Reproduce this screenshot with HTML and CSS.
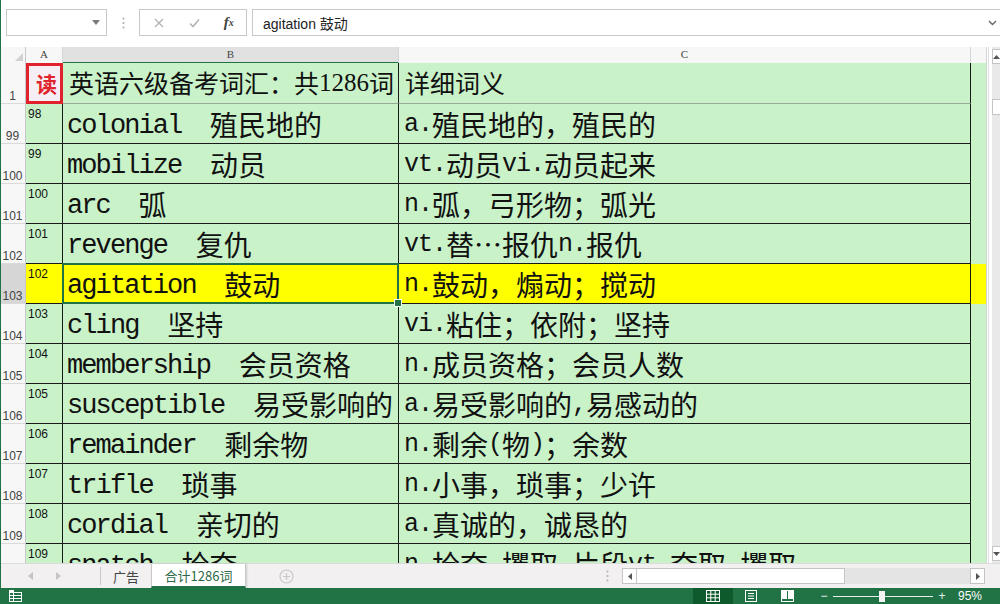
FILE: index.html
```html
<!DOCTYPE html>
<html lang="zh-CN">
<head>
<meta charset="utf-8">
<title>英语六级备考词汇</title>
<link rel="stylesheet" href="styles.css">
</head>
<body>
<div class="app">
  <div class="fbar">
    <div class="namebox">
      <svg width="8" height="5" viewBox="0 0 8 5"><path d="M0 0H8L4 5Z" fill="#7a7a7a"/></svg>
    </div>
    <div class="grip">
      <svg width="3" height="12" viewBox="0 0 3 12"><circle cx="1.5" cy="1.5" r="1" fill="#a8a8a8"/><circle cx="1.5" cy="6" r="1" fill="#a8a8a8"/><circle cx="1.5" cy="10.5" r="1" fill="#a8a8a8"/></svg>
    </div>
    <div class="fxbox">
      <span class="fxi"><svg width="10" height="10" viewBox="0 0 10 10"><path d="M1 1L9 9M9 1L1 9" stroke="#b4b4b4" stroke-width="1.4"/></svg></span>
      <span class="fxi"><svg width="11" height="10" viewBox="0 0 11 10"><path d="M1 5.5L4 8.5L10 1.5" stroke="#b4b4b4" stroke-width="1.6" fill="none"/></svg></span>
      <span class="fxi fx"><i>f</i><i class="x">x</i></span>
    </div>
    <div class="finput">
      <span>agitation 鼓动</span>
      <svg class="chev" width="9" height="6" viewBox="0 0 9 6"><path d="M1 1L4.5 4.5L8 1" stroke="#666" stroke-width="1.4" fill="none"/></svg>
    </div>
  </div>

  <div class="main">
    <div class="sheet">
      <div class="row hdr">
        <div class="corner"><svg width="8" height="8" viewBox="0 0 8 8"><path d="M8 0V8H0Z" fill="#d2d2d2"/></svg></div>
        <div class="ch">A</div>
        <div class="ch sel">B</div>
        <div class="ch">C</div>
        <div class="ch"></div>
      </div>

      <div class="row first">
        <div class="rh">1</div>
        <div class="a read">读</div>
        <div class="b t">英语六级备考词汇：共<span class="n">1286</span>词</div>
        <div class="c t">详细词义</div>
        <div class="d t"></div>
      </div>

      <div class="row">
        <div class="rh">99</div><div class="a">98</div>
        <div class="b"><span class="l">colonial  </span>殖民地的</div>
        <div class="c"><span class="l">a.</span>殖民地的，殖民的</div><div class="d"></div>
      </div>
      <div class="row">
        <div class="rh">100</div><div class="a">99</div>
        <div class="b"><span class="l">mobilize  </span>动员</div>
        <div class="c"><span class="l">vt.</span>动员<span class="l">vi.</span>动员起来</div><div class="d"></div>
      </div>
      <div class="row">
        <div class="rh">101</div><div class="a">100</div>
        <div class="b"><span class="l">arc  </span>弧</div>
        <div class="c"><span class="l">n.</span>弧，弓形物；弧光</div><div class="d"></div>
      </div>
      <div class="row">
        <div class="rh">102</div><div class="a">101</div>
        <div class="b"><span class="l">revenge  </span>复仇</div>
        <div class="c"><span class="l">vt.</span>替…报仇<span class="l">n.</span>报仇</div><div class="d"></div>
      </div>
      <div class="row hl">
        <div class="rh on">103</div><div class="a">102</div>
        <div class="b sel"><span class="l">agitation  </span>鼓动</div>
        <div class="c"><span class="l">n.</span>鼓动，煽动；搅动</div><div class="d"></div>
      </div>
      <div class="row">
        <div class="rh">104</div><div class="a">103</div>
        <div class="b"><span class="l">cling  </span>坚持</div>
        <div class="c"><span class="l">vi.</span>粘住；依附；坚持</div><div class="d"></div>
      </div>
      <div class="row">
        <div class="rh">105</div><div class="a">104</div>
        <div class="b"><span class="l">membership  </span>会员资格</div>
        <div class="c"><span class="l">n.</span>成员资格；会员人数</div><div class="d"></div>
      </div>
      <div class="row">
        <div class="rh">106</div><div class="a">105</div>
        <div class="b"><span class="l">susceptible  </span>易受影响的</div>
        <div class="c"><span class="l">a.</span>易受影响的<span class="l">,</span>易感动的</div><div class="d"></div>
      </div>
      <div class="row">
        <div class="rh">107</div><div class="a">106</div>
        <div class="b"><span class="l">remainder  </span>剩余物</div>
        <div class="c"><span class="l">n.</span>剩余<span class="l">(</span>物<span class="l">)</span>；余数</div><div class="d"></div>
      </div>
      <div class="row">
        <div class="rh">108</div><div class="a">107</div>
        <div class="b"><span class="l">trifle  </span>琐事</div>
        <div class="c"><span class="l">n.</span>小事，琐事；少许</div><div class="d"></div>
      </div>
      <div class="row">
        <div class="rh">109</div><div class="a">108</div>
        <div class="b"><span class="l">cordial  </span>亲切的</div>
        <div class="c"><span class="l">a.</span>真诚的，诚恳的</div><div class="d"></div>
      </div>
      <div class="row">
        <div class="rh">110</div><div class="a">109</div>
        <div class="b"><span class="l">snatch  </span>抢夺</div>
        <div class="c"><span class="l">n.</span>抢夺<span class="l">,</span>攫取<span class="l">,</span>片段<span class="l">vt.</span>夺取<span class="l">,</span>攫取</div><div class="d"></div>
      </div>
    </div>

    <div class="vscroll">
      <div class="vtrack">
        <div class="vbtn"><svg width="7" height="4" viewBox="0 0 7 4"><path d="M0 4H7L3.5 0Z" fill="#555"/></svg></div>
        <div class="vthumb"></div>
        <div class="vbtn down"><svg width="7" height="4" viewBox="0 0 7 4"><path d="M0 0H7L3.5 4Z" fill="#555"/></svg></div>
      </div>
    </div>
  </div>

  <div class="tabbar">
    <div class="navs">
      <svg width="5" height="8" viewBox="0 0 5 8"><path d="M5 0V8L0 4Z" fill="#c4c4c4"/></svg>
      <svg width="5" height="8" viewBox="0 0 5 8"><path d="M0 0V8L5 4Z" fill="#c4c4c4"/></svg>
    </div>
    <div class="tab">广告</div>
    <div class="tab active">合计1286词</div>
    <div class="addsheet">
      <svg width="15" height="15" viewBox="0 0 15 15"><circle cx="7.5" cy="7.5" r="6.5" fill="none" stroke="#c8c8c8" stroke-width="1.2"/><path d="M7.5 4V11M4 7.5H11" stroke="#c8c8c8" stroke-width="1.2"/></svg>
    </div>
    <div class="hdots">
      <svg width="3" height="12" viewBox="0 0 3 12"><circle cx="1.5" cy="1.5" r="1" fill="#b0b0b0"/><circle cx="1.5" cy="6" r="1" fill="#b0b0b0"/><circle cx="1.5" cy="10.5" r="1" fill="#b0b0b0"/></svg>
    </div>
    <div class="hscroll">
      <div class="hbtn"><svg width="4" height="7" viewBox="0 0 4 7"><path d="M4 0V7L0 3.5Z" fill="#555"/></svg></div>
      <div class="hthumb"></div>
      <div class="htrack"></div>
      <div class="hbtn"><svg width="4" height="7" viewBox="0 0 4 7"><path d="M0 0V7L4 3.5Z" fill="#555"/></svg></div>
    </div>
  </div>

  <div class="status">
    <div class="macro">
      <svg width="13" height="12" viewBox="0 0 13 12"><rect x="0.5" y="2.5" width="12" height="9" fill="none" stroke="#fff"/><path d="M0.5 5.5H12.5M0.5 8.5H12.5M4.5 2.5V11.5" stroke="#fff"/><rect x="0" y="0" width="5" height="3" fill="#fff"/></svg>
    </div>
    <div class="views">
      <div class="vb on"><svg width="14" height="12" viewBox="0 0 14 12"><rect x="0.5" y="0.5" width="13" height="11" fill="none" stroke="#fff"/><path d="M0.5 4.2H13.5M0.5 7.8H13.5M4.8 0.5V11.5M9.2 0.5V11.5" stroke="#fff"/></svg></div>
      <div class="vb"><svg width="12" height="12" viewBox="0 0 12 12"><rect x="0.5" y="0.5" width="11" height="11" fill="none" stroke="#fff"/><path d="M3 3.5H9M3 6H9M3 8.5H9" stroke="#fff"/></svg></div>
      <div class="vb"><svg width="13" height="12" viewBox="0 0 13 12"><rect x="0.5" y="0.5" width="12" height="11" fill="none" stroke="#fff"/><rect x="1" y="1" width="5" height="8" fill="#fff"/><rect x="7" y="1" width="5" height="8" fill="#fff"/></svg></div>
    </div>
    <div class="zoom">
      <span class="zm">−</span>
      <span class="zline"><span class="zthumb"></span></span>
      <span class="zm">+</span>
      <span class="zpct">95%</span>
    </div>
  </div>
</div>
</body>
</html>
```

FILE: styles.css
```css
* { box-sizing: border-box; margin: 0; padding: 0; }

html, body {
  width: 1000px;
  height: 604px;
  overflow: hidden;
  background: #fff;
}

body {
  font-family: "Liberation Sans", "Noto Sans CJK SC", sans-serif;
  color: #222;
}

.app {
  position: relative;
  display: flex;
  flex-direction: column;
  height: 604px;
}

.app::before {
  content: "";
  position: absolute;
  left: 0;
  top: 0;
  bottom: 16px;
  width: 1px;
  background: #217346;
  z-index: 5;
}

/* ---------- formula bar ---------- */
.fbar {
  height: 47px;
  flex: none;
  display: flex;
  align-items: flex-start;
  padding: 9px 0 0 6px;
  background: #fff;
}

.namebox {
  width: 101px;
  height: 27px;
  border: 1px solid #c8c8c8;
  display: flex;
  align-items: center;
  justify-content: flex-end;
  padding-right: 6px;
}

.grip {
  width: 32px;
  height: 27px;
  display: flex;
  align-items: center;
  justify-content: center;
}

.fxbox {
  width: 108px;
  height: 27px;
  border: 1px solid #c8c8c8;
  display: flex;
  align-items: center;
  padding-left: 2px;
}

.fxi {
  width: 36px;
  display: flex;
  justify-content: center;
  align-items: center;
}

.fx {
  font-family: "Liberation Serif", serif;
  font-size: 15px;
  color: #444;
  font-weight: bold;
}
.fx .x { font-size: 10px; }

.finput {
  flex: 1;
  margin-left: 5px;
  height: 27px;
  border: 1px solid #c8c8c8;
  border-right: none;
  display: flex;
  align-items: center;
  padding-left: 10px;
  font-size: 14px;
  color: #222;
}

.chev { margin-left: auto; margin-right: 3px; }

/* ---------- sheet ---------- */
.main {
  display: flex;
  height: 516px;
  flex: none;
}

.sheet {
  width: 988px;
  height: 516px;
  overflow: hidden;
}

.row {
  display: grid;
  grid-template-columns: 26px 37px 336px 572px 16px;
  height: 40px;
}

.row.hdr { height: 16px; }
.row.first { height: 41px; }

.corner {
  background: #f7f7f7;
  border-right: 1px solid #c8c8c8;
  border-bottom: 1px solid #c8c8c8;
  display: flex;
  align-items: flex-end;
  justify-content: flex-end;
  padding: 0 2px 2px 0;
}

.ch {
  background: #f7f7f7;
  border-right: 1px solid #d6d6d6;
  border-bottom: 1px solid #c8c8c8;
  font-family: "Liberation Serif", serif;
  font-size: 11px;
  line-height: 15px;
  text-align: center;
  color: #444;
}

.ch.sel {
  background: #e1e1e1;
  border-bottom: 2px solid #217346;
}

.rh {
  background: #f7f7f7;
  border-right: 1px solid #c8c8c8;
  border-bottom: 1px solid #dadada;
  font-size: 12px;
  line-height: 12px;
  color: #444;
  display: flex;
  align-items: flex-end;
  justify-content: center;
  padding-bottom: 1px;
}

.rh.on { background: #d6d6d6; }

.a, .b, .c, .d { background: #c9f2c9; }

.a {
  border-right: 1px solid #1a1a1a;
  border-bottom: 1px solid #1a1a1a;
  font-size: 12px;
  line-height: 12px;
  padding: 4px 0 0 2px;
  color: #111;
}

.b, .c {
  border-right: 1px solid #1a1a1a;
  border-bottom: 1px solid #1a1a1a;
  display: flex;
  align-items: flex-end;
  white-space: pre;
  overflow: hidden;
  font-family: "Noto Sans CJK SC", sans-serif;
  color: #111;
  padding-bottom: 5px;
}

.b {
  font-size: 28px;
  line-height: 28px;
  padding-left: 4px;
}

.c {
  font-size: 28px;
  line-height: 28px;
  padding-left: 5px;
}

.l {
  font-family: "Liberation Mono", monospace;
  font-size: 27px;
  letter-spacing: -1.9px;
  position: relative;
  top: 2px;
}

.c .l {
  font-size: 25px;
  letter-spacing: -1px;
  top: 1px;
}

.d {
  border-right: 1px solid #d0d8d0;
}

.first .a, .first .b, .first .c, .first .d {
  border-bottom-color: #9aaa9a;
}

.b.t, .c.t {
  font-size: 25px;
  line-height: 25px;
  padding-bottom: 8px;
}
.b.t { padding-left: 6px; }
.c.t { padding-left: 6px; }

.n { font-family: "Liberation Serif", serif; }

.a.read {
  position: relative;
  background: #f5eff5;
  color: #e0222c;
  font-family: "Noto Sans CJK SC", sans-serif;
  font-weight: bold;
  font-size: 21px;
  line-height: 22px;
  display: flex;
  align-items: flex-end;
  padding: 0 0 9px 10px;
}

.a.read::after {
  content: "";
  position: absolute;
  left: 0;
  top: 0;
  right: -1px;
  bottom: -1px;
  border: 3px solid #e0222c;
}

.hl .a, .hl .b, .hl .c, .hl .d { background: #ffff00; }

.b.sel { position: relative; overflow: visible; }

.b.sel::after {
  content: "";
  position: absolute;
  left: -1px;
  top: -1px;
  right: -1px;
  bottom: -1px;
  border: 2px solid #217346;
  pointer-events: none;
}

.b.sel::before {
  content: "";
  position: absolute;
  right: -4px;
  bottom: -4px;
  width: 6px;
  height: 6px;
  background: #217346;
  border: 1px solid #fff;
  z-index: 2;
}

/* ---------- vertical scroll ---------- */
.vscroll {
  width: 12px;
  height: 516px;
  background: #fff;
  padding-left: 3px;
  border-left: 1px solid #e0e0e0;
}

.vtrack {
  height: 100%;
  background: #e9e9e9;
  display: flex;
  flex-direction: column;
  padding-top: 2px;
}

.vbtn {
  height: 15px;
  background: #fff;
  border: 1px solid #c4c4c4;
  border-right: none;
  display: flex;
  align-items: center;
  justify-content: center;
}

.vbtn.down { margin-top: auto; margin-bottom: 2px; }

.vthumb {
  height: 16px;
  margin-top: 35px;
  background: #fff;
  border: 1px solid #c4c4c4;
  border-right: none;
}

/* ---------- tab bar ---------- */
.tabbar {
  height: 25px;
  flex: none;
  display: flex;
  align-items: stretch;
  background: #f2f0f1;
  border-top: 1px solid #dcdcdc;
}

.navs {
  width: 101px;
  display: flex;
  align-items: center;
  gap: 23px;
  padding-left: 28px;
  border-right: 1px solid #c8c8c8;
  margin: 3px 0;
}

.tab {
  display: flex;
  align-items: center;
  justify-content: center;
  font-family: "Noto Sans CJK SC", sans-serif;
  font-size: 13px;
  color: #444;
  width: 50px;
}

.tab.active {
  width: 95px;
  background: #fff;
  color: #2e6a47;
  border-left: 1px solid #c8c8c8;
  border-right: 1px solid #c8c8c8;
  border-bottom: 2px solid #217346;
  box-shadow: 1px 0 2px rgba(0,0,0,0.15);
}

.addsheet {
  margin-left: 33px;
  display: flex;
  align-items: center;
}

.hdots {
  margin-left: 312px;
  display: flex;
  align-items: center;
}

.hscroll {
  margin-left: 13px;
  width: 363px;
  display: flex;
  align-items: center;
}

.hscroll > * { height: 16px; }

.hbtn {
  width: 15px;
  background: #fff;
  border: 1px solid #c4c4c4;
  display: flex;
  align-items: center;
  justify-content: center;
}

.hthumb {
  width: 208px;
  background: #fff;
  border: 1px solid #c4c4c4;
  border-left: none;
}

.htrack {
  flex: 1;
  background: #e4e4e4;
}

/* ---------- status bar ---------- */
.status {
  height: 16px;
  flex: none;
  background: #217346;
  display: flex;
  align-items: center;
  color: #fff;
}

.macro {
  padding-left: 9px;
  display: flex;
  align-items: center;
}

.views {
  margin-left: 671px;
  display: flex;
  height: 16px;
}

.vb {
  width: 36px;
  display: flex;
  align-items: center;
  justify-content: center;
}

.vb.on {
  width: 40px;
  background: #0f5a2c;
}

.zoom {
  margin-left: 14px;
  display: flex;
  align-items: center;
  font-size: 12px;
}

.zm {
  width: 10px;
  text-align: center;
  line-height: 12px;
  color: #e6efe9;
}

.zline {
  position: relative;
  width: 100px;
  height: 1px;
  background: #e6efe9;
  margin: 0 4px;
}

.zthumb {
  position: absolute;
  left: 46px;
  top: -5px;
  width: 6px;
  height: 11px;
  background: #f4f4f4;
}

.zpct {
  margin-left: 11px;
  font-size: 12px;
  line-height: 12px;
  color: #fff;
}
```
